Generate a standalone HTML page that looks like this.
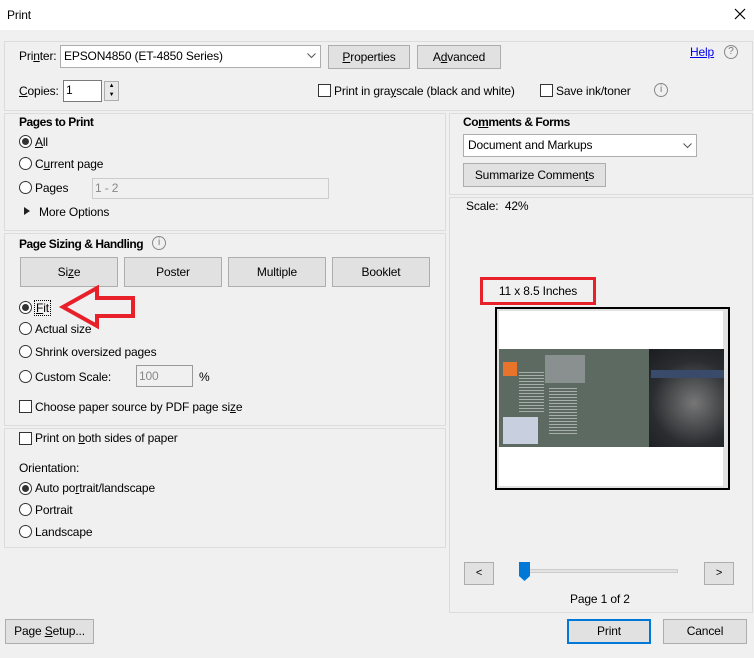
<!DOCTYPE html>
<html><head><meta charset="utf-8"><style>
*{box-sizing:border-box;margin:0;padding:0}
body{width:754px;height:658px;background:#f0f0f0;font:12px "Liberation Sans",sans-serif;letter-spacing:-0.15px;color:#000;position:relative;overflow:hidden}
.a{position:absolute;white-space:nowrap}
.panel{position:absolute;border:1px solid #dcdcdc}
.btn{position:absolute;background:#e1e1e1;border:1px solid #adadad;text-align:center}
.inp{position:absolute;background:#fff;border:1px solid #7a7a7a}
.rad{position:absolute;width:13px;height:13px;border:1px solid #333;border-radius:50%;background:#fff}
.rad.on:after{content:"";position:absolute;left:2px;top:2px;width:7px;height:7px;border-radius:50%;background:#333}
.chk{position:absolute;width:13px;height:13px;border:1px solid #333;background:#fff}
.b{font-weight:bold;letter-spacing:-0.45px}
u{text-decoration:underline}
</style></head><body>
<div class="a" style="left:0;top:0;width:754px;height:30px;background:#fff"></div>
<div class="a" style="left:7px;top:8px">Print</div>
<svg class="a" style="left:734px;top:8px" width="12" height="12"><path d="M1 1L11 11M11 1L1 11" stroke="#000" stroke-width="1.2"/></svg>

<div class="panel" style="left:4px;top:41px;width:749px;height:70px"></div>
<div class="a" style="left:19px;top:49px">Pri<u>n</u>ter:</div>
<div class="inp" style="left:60px;top:45px;width:261px;height:23px;border-color:#adadad"></div>
<div class="a" style="left:64px;top:49px">EPSON4850 (ET-4850 Series)</div>
<svg class="a" style="left:307px;top:53px" width="9" height="6"><path d="M0.5 0.5L4.5 4.5L8.5 0.5" fill="none" stroke="#555"/></svg>
<div class="btn" style="left:328px;top:45px;width:82px;height:24px;line-height:22px"><u>P</u>roperties</div>
<div class="btn" style="left:417px;top:45px;width:84px;height:24px;line-height:22px">A<u>d</u>vanced</div>
<div class="a" style="left:690px;top:45px;color:#0000ee;text-decoration:underline">Help</div>
<div class="a" style="left:724px;top:45px;width:14px;height:14px;border:1px solid #888;border-radius:50%;font-size:10px;color:#777;text-align:center;line-height:12px">?</div>
<div class="a" style="left:19px;top:84px"><u>C</u>opies:</div>
<div class="inp" style="left:63px;top:80px;width:39px;height:22px"></div>
<div class="a" style="left:66px;top:83px">1</div>
<div class="a" style="left:104px;top:81px;width:15px;height:20px;border:1px solid #adadad;background:#e8e8e8;font-size:6px;text-align:center;line-height:9px">▲<br>▼</div>
<div class="chk" style="left:318px;top:84px"></div>
<div class="a" style="left:334px;top:84px">Print in gra<u>y</u>scale (black and white)</div>
<div class="chk" style="left:540px;top:84px"></div>
<div class="a" style="left:556px;top:84px">Save ink/toner</div>
<div class="a" style="left:654px;top:83px;width:14px;height:14px;border:1px solid #888;border-radius:50%;font-size:10px;color:#777;text-align:center;line-height:12px">i</div>

<div class="panel" style="left:4px;top:113px;width:442px;height:118px"></div>
<div class="a b" style="left:19px;top:115px">Pages to Print</div>
<div class="rad on" style="left:19px;top:135px"></div><div class="a" style="left:35px;top:135px"><u>A</u>ll</div>
<div class="rad" style="left:19px;top:157px"></div><div class="a" style="left:35px;top:157px">C<u>u</u>rrent page</div>
<div class="rad" style="left:19px;top:181px"></div><div class="a" style="left:35px;top:181px">Pa<u>g</u>es</div>
<div class="inp" style="left:92px;top:178px;width:237px;height:21px;background:#f0f0f0;border-color:#ccc"></div>
<div class="a" style="left:95px;top:181px;color:#888">1 - 2</div>
<svg class="a" style="left:24px;top:207px" width="6" height="8"><path d="M0 0L6 4L0 8Z" fill="#222"/></svg>
<div class="a" style="left:39px;top:205px">More Options</div>

<div class="panel" style="left:4px;top:233px;width:442px;height:193px"></div>
<div class="a b" style="left:19px;top:237px">Page Sizing &amp; Handling</div>
<div class="a" style="left:152px;top:236px;width:14px;height:14px;border:1px solid #888;border-radius:50%;font-size:10px;color:#777;text-align:center;line-height:12px">i</div>
<div class="btn" style="left:20px;top:257px;width:98px;height:30px;line-height:28px">Si<u>z</u>e</div>
<div class="btn" style="left:124px;top:257px;width:98px;height:30px;line-height:28px">Poster</div>
<div class="btn" style="left:228px;top:257px;width:98px;height:30px;line-height:28px">Multiple</div>
<div class="btn" style="left:332px;top:257px;width:98px;height:30px;line-height:28px">Booklet</div>
<div class="rad on" style="left:19px;top:301px"></div><div class="a" style="left:34px;top:300px;border:1px dotted #000;padding:0 1px"><u>F</u>it</div>
<svg class="a" style="left:55px;top:283px" width="85" height="50"><path d="M8 24L42 5V15H78V33H42V43Z" fill="none" stroke="#e8202a" stroke-width="4" stroke-linejoin="miter"/></svg>
<div class="rad" style="left:19px;top:322px"></div><div class="a" style="left:35px;top:322px">Actual size</div>
<div class="rad" style="left:19px;top:345px"></div><div class="a" style="left:35px;top:345px">Shrink oversized pages</div>
<div class="rad" style="left:19px;top:370px"></div><div class="a" style="left:35px;top:370px">Custom Scale:</div>
<div class="inp" style="left:136px;top:365px;width:57px;height:22px;background:#f0f0f0;border-color:#999"></div>
<div class="a" style="left:139px;top:369px;color:#888">100</div>
<div class="a" style="left:199px;top:370px">%</div>
<div class="chk" style="left:19px;top:400px"></div><div class="a" style="left:35px;top:400px">Choose paper source by PDF page si<u>z</u>e</div>

<div class="panel" style="left:4px;top:428px;width:442px;height:120px"></div>
<div class="chk" style="left:19px;top:432px"></div><div class="a" style="left:35px;top:431px">Print on <u>b</u>oth sides of paper</div>
<div class="a" style="left:19px;top:461px">Orientation:</div>
<div class="rad on" style="left:19px;top:482px"></div><div class="a" style="left:35px;top:481px">Auto po<u>r</u>trait/landscape</div>
<div class="rad" style="left:19px;top:503px"></div><div class="a" style="left:35px;top:503px">Portrait</div>
<div class="rad" style="left:19px;top:525px"></div><div class="a" style="left:35px;top:525px">Landscape</div>

<div class="panel" style="left:449px;top:113px;width:304px;height:82px"></div>
<div class="a b" style="left:463px;top:115px">Co<u>m</u>ments &amp; Forms</div>
<div class="inp" style="left:463px;top:134px;width:234px;height:23px;border-color:#adadad"></div>
<div class="a" style="left:468px;top:138px">Document and Markups</div>
<svg class="a" style="left:683px;top:143px" width="9" height="6"><path d="M0.5 0.5L4.5 4.5L8.5 0.5" fill="none" stroke="#555"/></svg>
<div class="btn" style="left:463px;top:163px;width:143px;height:24px;line-height:22px">Summarize Commen<u>t</u>s</div>

<div class="panel" style="left:449px;top:197px;width:304px;height:416px"></div>
<div class="a" style="left:466px;top:199px">Scale:&nbsp; 42%</div>
<div class="a" style="left:480px;top:277px;width:116px;height:28px;border:3px solid #e8202a;text-align:center;line-height:22px">11 x 8.5 Inches</div>
<div class="a" style="left:495px;top:307px;width:235px;height:183px;border:2px solid #000;background:#e2e2e2"></div>
<div class="a" style="left:499px;top:311px;width:224px;height:175px;background:#fff"></div>
<div class="a" style="left:499px;top:349px;width:150px;height:98px;background:#5c6a62"></div>
<div class="a" style="left:649px;top:349px;width:75px;height:98px;background:radial-gradient(circle at 60% 55%,#777,#2a2d30 60%,#1a1c1e)"></div>
<div class="a" style="left:503px;top:362px;width:14px;height:14px;background:#e8742c"></div>
<div class="a" style="left:545px;top:355px;width:40px;height:28px;background:#8a9090"></div>
<div class="a" style="left:503px;top:417px;width:35px;height:27px;background:#c8d0e0"></div>
<div class="a" style="left:519px;top:372px;width:25px;height:40px;background:repeating-linear-gradient(#c8ccc8 0 1px,transparent 1px 3px);opacity:.7"></div>
<div class="a" style="left:549px;top:388px;width:28px;height:46px;background:repeating-linear-gradient(#c8ccc8 0 1px,transparent 1px 3px);opacity:.7"></div>
<div class="a" style="left:651px;top:370px;width:73px;height:8px;background:#3a4a6a"></div>

<div class="btn" style="left:464px;top:562px;width:30px;height:23px;line-height:21px;font-size:11px">&lt;</div>
<div class="a" style="left:520px;top:569px;width:158px;height:4px;background:#e3e3e3;border:1px solid #ccc"></div>
<svg class="a" style="left:519px;top:562px" width="12" height="19"><path d="M0 0H11V14L5.5 19L0 14Z" fill="#0078d7"/></svg>
<div class="btn" style="left:704px;top:562px;width:30px;height:23px;line-height:21px;font-size:11px">&gt;</div>
<div class="a" style="left:570px;top:592px">Page 1 of 2</div>

<div class="btn" style="left:5px;top:619px;width:89px;height:25px;line-height:23px">Page <u>S</u>etup...</div>
<div class="btn" style="left:567px;top:619px;width:84px;height:25px;line-height:21px;border:2px solid #0078d7">Print</div>
<div class="btn" style="left:663px;top:619px;width:84px;height:25px;line-height:23px">Cancel</div>
</body></html>
